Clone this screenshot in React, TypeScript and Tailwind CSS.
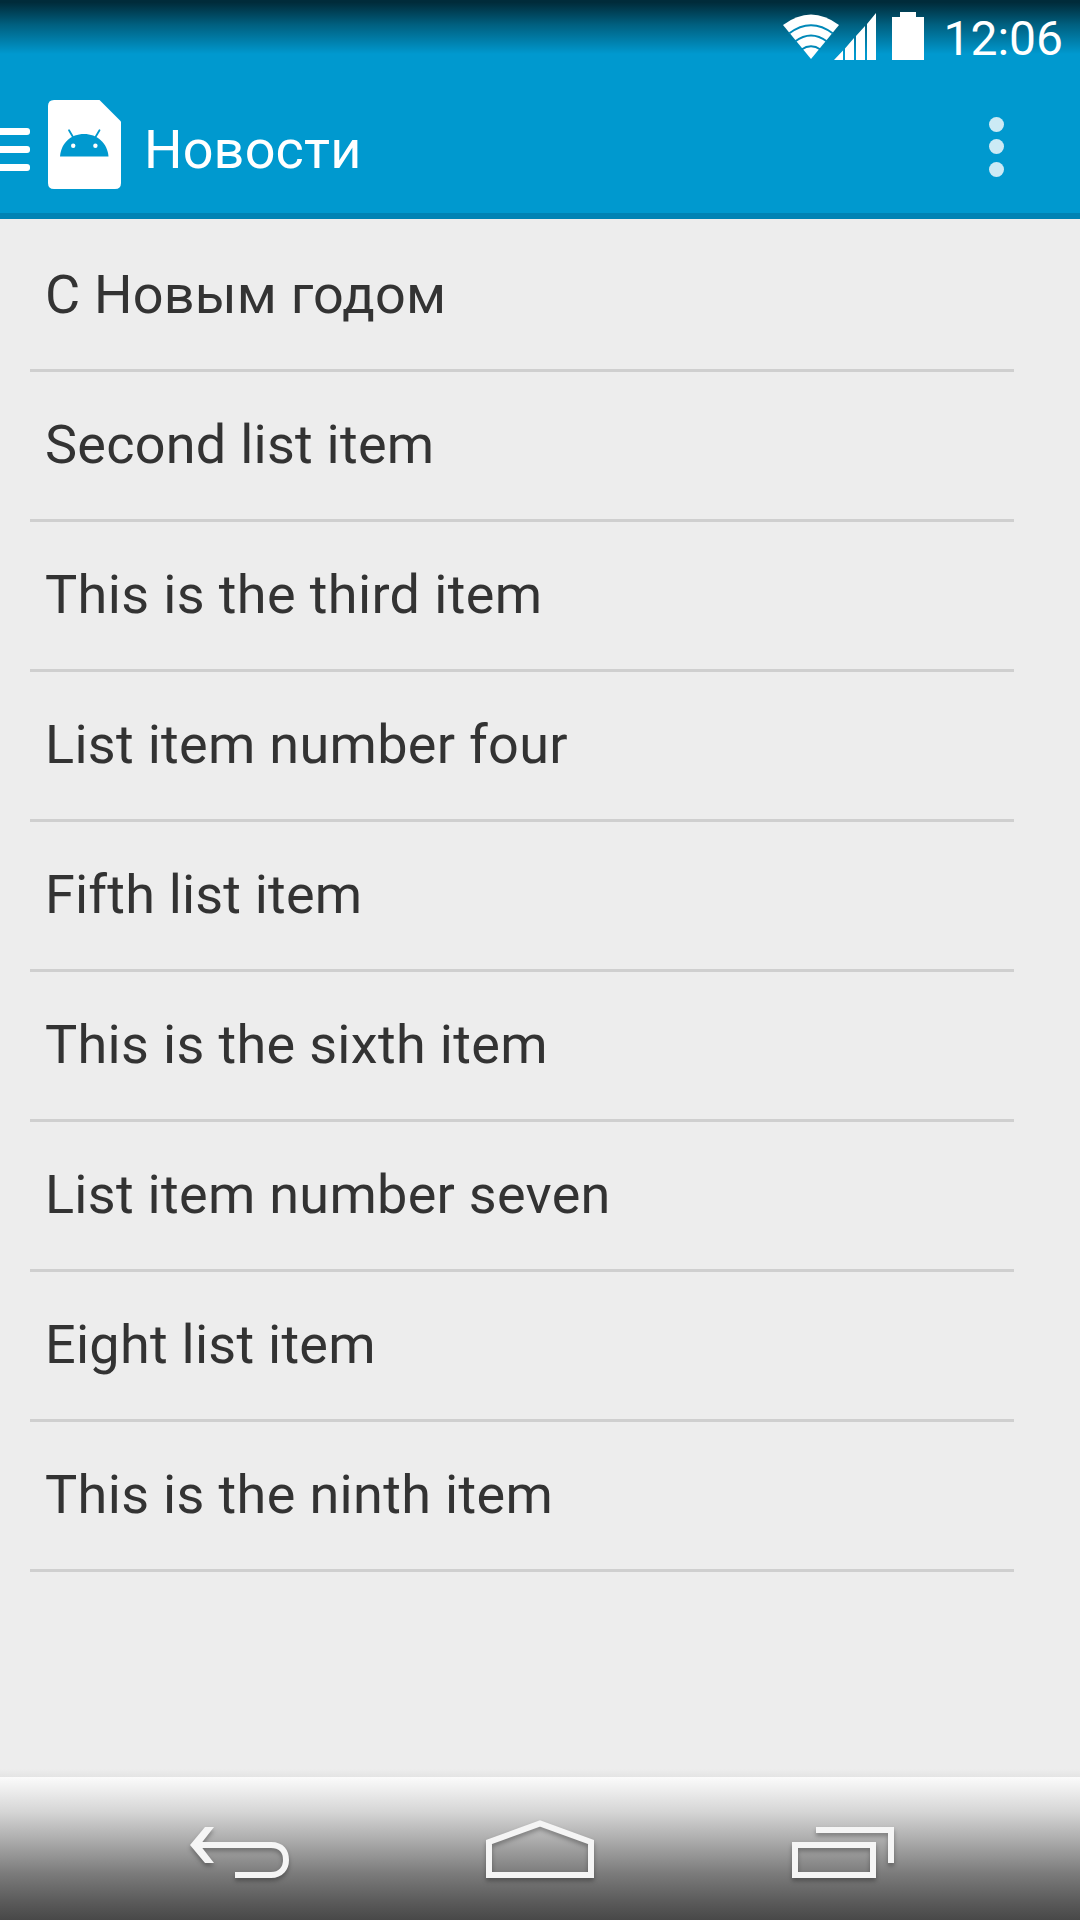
const items: { text: string; className: string }[] = [
  { text: 'С Новым годом', className: 'tracking-[0.2px]' },
  { text: 'Second list item', className: 'tracking-[0.25px]' },
  { text: 'This is the third item', className: 'tracking-[0.38px]' },
  { text: 'List item number four', className: 'tracking-[0.3px]' },
  { text: 'Fifth list item', className: 'tracking-[0.18px]' },
  { text: 'This is the sixth item', className: 'tracking-[0.33px]' },
  { text: 'List item number seven', className: 'tracking-[0.29px]' },
  { text: 'Eight list item', className: 'tracking-[0.26px]' },
  { text: 'This is the ninth item', className: 'tracking-[0.35px]' },
];

function StatusBar() {
  return (
    <div className="flex h-[75px] justify-end bg-linear-to-b from-[#002b3a] from-3% via-[#006080] via-33% to-[#0099cf] to-72% pr-[17px] text-white">
      <svg className="mt-[12px] h-[48px] w-[95px]" viewBox="783 12 95 48" fill="currentColor">
        <path d="M783 25Q811 4 839 25L811 59Z" />
        <g fill="none" stroke="#0088b8" strokeWidth="2">
          <path d="M789 33.5Q811 17 833 33.5" />
          <path d="M795 41.5Q811 29.5 827 41.5" />
          <path d="M801.5 49.5Q811 43 820.5 49.5" />
        </g>
        <path d="M834 60L843 50.5V60ZM845 48.5L854 38V60H845ZM856 36L865 26V60H856ZM867 24L876 13V60H867Z" />
      </svg>
      <svg className="mt-[12px] ml-[14px] h-[48px] w-[32px]" viewBox="0 0 32 48" fill="currentColor">
        <path d="M8 0H24V5H32V48H0V5H8Z" />
      </svg>
      <span className="ml-[19px] mt-[11px] text-[48px] leading-[56px]">12:06</span>
    </div>
  );
}

function ActionBar() {
  return (
    <div className="flex h-[144px] border-b-6 border-[#0083b4] text-white">
      <div className="mt-[53px] flex w-[30px] flex-col gap-[11px]">
        <span className="h-[7px] rounded-r-[3px] bg-white" />
        <span className="h-[7px] rounded-r-[3px] bg-white" />
        <span className="h-[7px] rounded-r-[3px] bg-white" />
      </div>
      <svg className="mt-[25px] ml-[18px] h-[89px] w-[73px]" viewBox="48 100 73 89">
        <path fill="#fff" d="M54 100H99.5L121 121.5V183Q121 189 115 189H54Q48 189 48 183V106Q48 100 54 100Z" />
        <path fill="#0099cf" d="M60 156.5C61 143 71 134 84 134S107.5 143 108.5 156.5Z" />
        <path stroke="#0099cf" strokeWidth="1.8" strokeLinecap="round" d="M69 130.2L73 137M99.5 130.2L95.5 137" />
        <circle cx="73.2" cy="145.8" r="2.2" fill="#fff" />
        <circle cx="95.4" cy="145.8" r="2.2" fill="#fff" />
      </svg>
      <h1 className="mt-[43px] ml-[23px] text-[54px] leading-[64px] tracking-[0.15px]">Новости</h1>
      <div className="mt-[42px] mr-[76px] ml-auto flex flex-col">
        <span className="size-[15px] rounded-full bg-[#cceaf5]" />
        <span className="mt-[7px] size-[15px] rounded-full bg-[#cceaf5]" />
        <span className="mt-[8px] size-[15px] rounded-full bg-[#cceaf5]" />
      </div>
    </div>
  );
}

function NavBar() {
  return (
    <nav className="flex h-[143px] bg-[linear-gradient(#fbfbfb,#ececec_10%,#d6d6d6_24%,#a8a8a8_46%,#7c7c7c_67%,#5b5b5b_87%,#484848)]">
      <svg
        className="h-[143px] w-full drop-shadow-[0_3px_2px_rgba(0,0,0,0.3)]"
        viewBox="0 1777 1080 143"
        fill="none"
        stroke="#f5f5f5"
        strokeWidth="6"
      >
        <path d="M198 1845H271C282 1845 286 1852 286 1860S281 1875 271 1875H235" />
        <path fill="#f5f5f5" stroke="none" d="M190 1845L205 1827H214L200 1845L214 1863H205Z" />
        <path d="M489 1842L540 1823.5L591 1842V1875H489Z" />
        <path d="M795 1845H873V1875H795ZM816 1830H891V1863" />
      </svg>
    </nav>
  );
}

export default function App() {
  return (
    <div className="flex h-[1920px] w-[1080px] flex-col overflow-hidden bg-[#ededed] font-[Roboto,sans-serif]">
      <header className="bg-[#0099cf]">
        <StatusBar />
        <ActionBar />
      </header>
      <ul className="mr-[66px] ml-[30px] pt-[3px] text-[54px] leading-[64px] text-[#333]">
        {items.map((item) => (
          <li key={item.text} className="h-[150px] border-b-3 border-[#cfcfcf] pt-[41px] pl-[15px]">
            <span className={item.className}>{item.text}</span>
          </li>
        ))}
      </ul>
      <div className="mt-auto h-[8px] bg-linear-to-b from-[#ededed] to-[#e4e4e4]" />
      <NavBar />
    </div>
  );
}
